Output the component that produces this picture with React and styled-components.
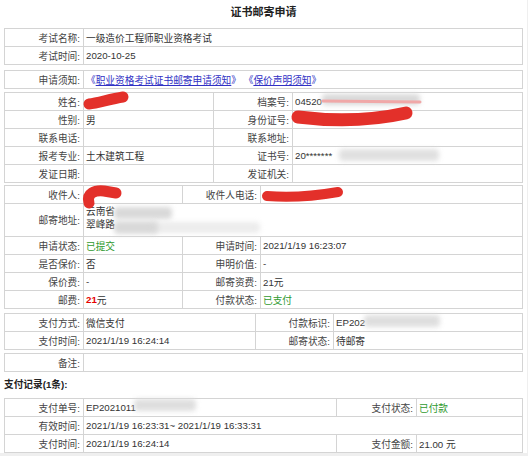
import React from 'react';
import styled, { createGlobalStyle } from 'styled-components';

const Global = createGlobalStyle`
  html, body { margin: 0; padding: 0; background: #efefef; }
  body {
    font-family: "Liberation Sans", "Noto Sans CJK SC", sans-serif;
    font-size: 9.7px;
    color: #333;
  }
`;

const Page = styled.div`
  position: relative;
  width: 527px;
  height: 453px;
  box-sizing: border-box;
  padding: 0 4px;
  background: #fff;
  overflow: hidden;
`;

const Title = styled.h1`
  margin: 0 0 4px;
  height: 24px;
  line-height: 24px;
  font-size: 11px;
  font-weight: bold;
  text-align: center;
  color: #222;
`;

const Table = styled.div`
  display: grid;
  grid-template-columns: ${(p) => p.$cols};
  gap: 1px;
  width: 519px;
  box-sizing: border-box;
  margin-top: ${(p) => p.$mt || 0}px;
  border: 1px solid #d4d4d4;
  background: #d4d4d4;
`;

const Label = styled.div`
  display: flex;
  align-items: center;
  justify-content: flex-end;
  min-height: 17px;
  padding-right: 3px;
  background: #fff;
  color: #444;
  white-space: nowrap;
`;

const Value = styled.div`
  display: flex;
  align-items: center;
  min-height: ${(p) => p.$h || 17}px;
  padding-left: 2px;
  background: #fff;
  color: ${(p) => p.$color || '#333'};
  white-space: nowrap;
  grid-column: span ${(p) => p.$span || 1};
`;

const Lines = styled.div`
  display: flex;
  flex-direction: column;
  justify-content: flex-start;
  padding: 2px 0 0 2px;
  height: 32px;
  box-sizing: border-box;
  line-height: 12.5px;
  background: #fff;
  grid-column: span 3;
`;

const Link = styled.a`
  color: #3030c4;
  text-decoration: underline;
`;

const Bracket = styled.span`
  color: #3030c4;
`;

const Red = styled.b`
  color: #e60000;
`;

const Heading = styled.div`
  height: 26px;
  line-height: 26px;
  font-weight: bold;
  color: #222;
`;

const Blur = styled.div`
  position: absolute;
  left: ${(p) => p.$x}px;
  top: ${(p) => p.$y}px;
  width: ${(p) => p.$w}px;
  height: ${(p) => p.$h}px;
  background: ${(p) => p.$c || '#d9d9d9'};
  filter: blur(2.5px);
  border-radius: 4px;
  opacity: ${(p) => p.$o || 1};
  pointer-events: none;
`;

const Scribbles = styled.svg`
  position: absolute;
  left: 0;
  top: 0;
  width: 527px;
  height: 453px;
  pointer-events: none;
`;

const GREEN = '#2f9a2f';

export default function App() {
  return (
    <>
      <Global />
      <Page>
        <Title>证书邮寄申请</Title>

        <Table $cols="78px 1fr">
          <Label>考试名称:</Label>
          <Value>一级造价工程师职业资格考试</Value>
          <Label>考试时间:</Label>
          <Value>2020-10-25</Value>
        </Table>

        <Table $cols="78px 1fr" $mt={5}>
          <Label>申请须知:</Label>
          <Value>
            <Bracket>《</Bracket>
            <Link>职业资格考试证书邮寄申请须知</Link>
            <Bracket>》</Bracket>
            &nbsp;
            <Bracket>《</Bracket>
            <Link>保价声明须知</Link>
            <Bracket>》</Bracket>
          </Value>
        </Table>

        <Table $cols="78px 129px 78px 1fr" $mt={3}>
          <Label>姓名:</Label>
          <Value />
          <Label>档案号:</Label>
          <Value>04520</Value>
          <Label>性别:</Label>
          <Value>男</Value>
          <Label>身份证号:</Label>
          <Value />
          <Label>联系电话:</Label>
          <Value />
          <Label>联系地址:</Label>
          <Value />
          <Label>报考专业:</Label>
          <Value>土木建筑工程</Value>
          <Label>证书号:</Label>
          <Value>20*******</Value>
          <Label>发证日期:</Label>
          <Value />
          <Label>发证机关:</Label>
          <Value />
        </Table>

        <Table $cols="78px 98px 77px 1fr" $mt={2}>
          <Label>收件人:</Label>
          <Value />
          <Label>收件人电话:</Label>
          <Value />
          <Label>邮寄地址:</Label>
          <Lines>
            <span>云南省</span>
            <span>翠峰路</span>
          </Lines>
          <Label>申请状态:</Label>
          <Value $color={GREEN}>已提交</Value>
          <Label>申请时间:</Label>
          <Value>2021/1/19 16:23:07</Value>
          <Label>是否保价:</Label>
          <Value>否</Value>
          <Label>申明价值:</Label>
          <Value>-</Value>
          <Label>保价费:</Label>
          <Value>-</Value>
          <Label>邮寄资费:</Label>
          <Value>21元</Value>
          <Label>邮费:</Label>
          <Value>
            <Red>21</Red>元
          </Value>
          <Label>付款状态:</Label>
          <Value $color={GREEN}>已支付</Value>
        </Table>

        <Table $cols="78px 171px 77px 1fr" $mt={4}>
          <Label>支付方式:</Label>
          <Value>微信支付</Value>
          <Label>付款标识:</Label>
          <Value>EP202</Value>
          <Label>支付时间:</Label>
          <Value>2021/1/19 16:24:14</Value>
          <Label>邮寄状态:</Label>
          <Value>待邮寄</Value>
        </Table>

        <Table $cols="78px 1fr" $mt={3}>
          <Label>备注:</Label>
          <Value />
        </Table>

        <Heading>支付记录(1条):</Heading>

        <Table $cols="78px 252px 79px 1fr">
          <Label>支付单号:</Label>
          <Value>EP2021011</Value>
          <Label>支付状态:</Label>
          <Value $color={GREEN}>已付款</Value>
          <Label>有效时间:</Label>
          <Value $span={3}>2021/1/19 16:23:31~ 2021/1/19 16:33:31</Value>
          <Label>支付时间:</Label>
          <Value>2021/1/19 16:24:14</Value>
          <Label>支付金额:</Label>
          <Value>21.00 元</Value>
        </Table>

        <Blur $x={322} $y={94} $w={98} $h={11} />
        <Blur $x={339} $y={149} $w={100} $h={12} $o={0.8} />
        <Blur $x={114} $y={207} $w={58} $h={12} />
        <Blur $x={114} $y={221} $w={44} $h={13} />
        <Blur $x={152} $y={222} $w={108} $h={11} $o={0.5} />
        <Blur $x={364} $y={315} $w={76} $h={12} $o={0.85} />
        <Blur $x={134} $y={399} $w={62} $h={12} $o={0.85} />

        <Scribbles viewBox="0 0 527 453">
          <g fill="none" stroke="#e3302a" strokeLinecap="round" strokeLinejoin="round">
            <path d="M323,101 L420,102" stroke="#f0a8a8" strokeWidth="3" />
            <path d="M89,104 C98,103 110,99 123,97" strokeWidth="11" />
            <path d="M298,117 C330,121 370,121 406,113" strokeWidth="13" />
            <path d="M89,203 C86,193 95,190 104,191 L116,193" strokeWidth="11" />
            <path d="M267,196 C290,198 315,196 338,192" strokeWidth="10" />
          </g>
        </Scribbles>
      </Page>
    </>
  );
}
